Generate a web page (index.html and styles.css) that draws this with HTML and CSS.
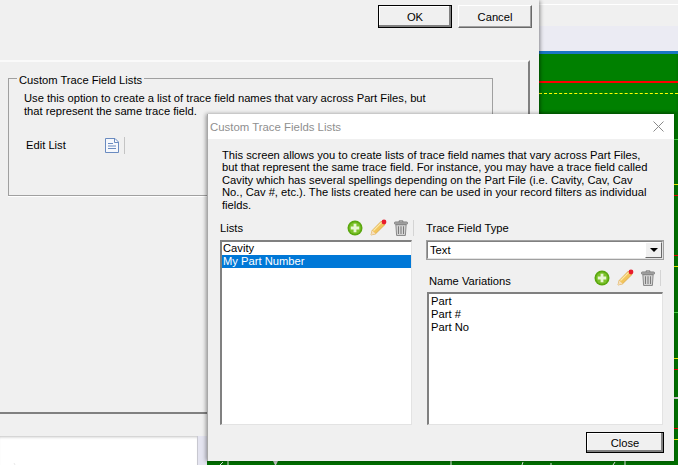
FILE: index.html
```html
<!DOCTYPE html>
<html lang="en">
<head>
<meta charset="utf-8">
<title>Custom Trace Fields Lists</title>
<link rel="stylesheet" href="styles.css">
</head>
<body>
<svg width="0" height="0" class="defs">
  <symbol id="i-add" viewBox="0 0 17 17">
    <circle cx="8.5" cy="8.5" r="8" fill="#5aa70f"/>
    <circle cx="8.5" cy="8.5" r="6.2" fill="#7cc22a"/>
    <path d="M7 4h3v3h3v3h-3v3H7v-3H4V7h3z" fill="#e9f6d4"/>
  </symbol>
  <symbol id="i-edit" viewBox="0 0 17 17">
    <path d="M1 16l1.2-4.5L11.5 2l3.5 3.5-9.4 9.3z" fill="#f2c55c" stroke="#d9a441" stroke-width=".8"/>
    <path d="M1 16l1.2-4.5 3.4 3.3z" fill="#f6dfc0"/>
    <path d="M3.5 11.5l8.7-8.7" stroke="#fbe9a8" stroke-width="1.2"/>
    <circle cx="14" cy="3" r="2.4" fill="#e81c2c"/>
  </symbol>
  <symbol id="i-trash" viewBox="0 0 15 17">
    <path d="M5.5 2V.8h4V2" fill="none" stroke="#777" stroke-width="1"/>
    <rect x=".5" y="2" width="14" height="2.5" rx="1" fill="#a9a9a9" stroke="#707070" stroke-width=".8"/>
    <path d="M2 5h11l-.8 11.5H2.800z" fill="#d6d6d6" stroke="#777" stroke-width=".9"/>
    <path d="M4.800 6.500v8.500M7.500 6.500v8.500M10.200 6.500v8.500" stroke="#7a7a7a" stroke-width="1.100"/>
  </symbol>
</svg>

<div class="desktop">
  <div class="app-strip">
    <div class="app-strip-top"></div>
    <div class="app-strip-low"></div>
  </div>
  <div class="plot">
    <i class="plot-red"></i>
    <i class="plot-yellow"></i>
  </div>
  <i class="tick tick-green t3"></i><i class="tick tick-yellow t2"></i><i class="tick tick-red t1"></i>
  <i class="tick tick-red t5"></i><i class="tick tick-yellow t4"></i><i class="tick tick-green t8"></i>
  <i class="tick tick-yellow t9"></i><i class="tick tick-red t10"></i><i class="tick tick-grey t11"></i>
  <i class="tick tick-red t6"></i><i class="tick tick-yellow t7"></i>

  <section class="back-window">
    <div class="back-buttons">
      <button class="btn btn-default btn-wide">OK</button>
      <button class="btn btn-wide">Cancel</button>
    </div>
    <div class="back-panel">
      <fieldset class="group">
        <legend>Custom Trace Field Lists</legend>
        <p>Use this option to create a list of trace field names that vary across Part Files, but<br>that represent the same trace field.</p>
        <div class="edit-row">
          <span class="edit-label">Edit List</span>
          <svg class="doc-icon" width="14" height="15" viewBox="0 0 14 15">
            <path d="M.5.500h9.500l3.500 3.500v10.500H.5z" fill="#f6f8fc" stroke="#6a8bc0"/>
            <path d="M9.500.500v4h4" fill="none" stroke="#6a8bc0"/>
            <path d="M3 5.500h5M3 8h8M3 10.500h8" stroke="#6a8bc0"/>
          </svg>
          <span class="tool-sep"></span>
        </div>
      </fieldset>
    </div>
  </section>

  <div class="below-white"></div>
  <div class="below-strip"></div>
  <svg class="bottom-marks" width="678" height="4" viewBox="0 0 678 4">
    <path d="M15 4l-1-2M220 4l3-3M228 4V0M451 4V0M522 4l1-3M551 4V2M613 4l2-3M625 4V0" fill="none" stroke="#e8e8e8"/>
    <path d="M273 0h5l-2 4h-1z" fill="#c8c8c8"/>
  </svg>

  <section class="dialog">
    <header class="dialog-title">
      <span>Custom Trace Fields Lists</span>
      <svg class="close-x" width="11" height="11" viewBox="0 0 11 11"><path d="M.5.500l10 10M10.500.500l-10 10" stroke="#8a8a8a" fill="none"/></svg>
    </header>
    <div class="dialog-body">
      <p class="intro">This screen allows you to create lists of trace field names that vary across Part Files,<br>but that represent the same trace field. For instance, you may have a trace field called<br>Cavity which has several spellings depending on the Part File (i.e. Cavity, Cav, Cav<br>No., Cav #, etc.). The lists created here can be used in your record filters as individual<br>fields.</p>
      <div class="columns">
        <div class="col-left">
          <div class="toolbar-row row-lists">
            <span>Lists</span>
            <span class="tools">
              <svg class="ic-add"><use href="#i-add"/></svg>
              <svg class="ic-edit"><use href="#i-edit"/></svg>
              <svg class="ic-trash"><use href="#i-trash"/></svg>
              <span class="tool-sep"></span>
            </span>
          </div>
          <ul class="listbox list-left">
            <li>Cavity</li>
            <li class="selected">My Part Number</li>
          </ul>
        </div>
        <div class="col-right">
          <div class="type-label">Trace Field Type</div>
          <div class="combo">
            <span>Text</span>
            <span class="combo-btn"><i></i></span>
          </div>
          <div class="toolbar-row row-variations">
            <span>Name Variations</span>
            <span class="tools">
              <svg class="ic-add"><use href="#i-add"/></svg>
              <svg class="ic-edit"><use href="#i-edit"/></svg>
              <svg class="ic-trash"><use href="#i-trash"/></svg>
              <span class="tool-sep"></span>
            </span>
          </div>
          <ul class="listbox list-right">
            <li>Part</li>
            <li>Part #</li>
            <li>Part No</li>
          </ul>
        </div>
      </div>
      <div class="dialog-footer">
        <button class="btn btn-default btn-close">Close</button>
      </div>
    </div>
  </section>
</div>
</body>
</html>
```
FILE: styles.css
```css
* { box-sizing: border-box; }
html, body { margin: 0; padding: 0; }
body {
  width: 678px;
  height: 465px;
  overflow: hidden;
  font-family: "Liberation Sans", Arial, sans-serif;
  font-size: 11.2px;
  color: #000;
  background: #fff;
}
.defs { position: absolute; }
.desktop { position: relative; width: 678px; height: 465px; overflow: hidden; background: #006f00; }

.app-strip { position: absolute; left: 539px; top: 0; width: 139px; height: 54px; background: #f0f0f0; border-bottom: 3px solid #1a76c4; }
.app-strip-top { height: 5px; border-bottom: 1px solid #fff; }
.app-strip-low { margin-top: 21px; height: 25px; background: #ebebf3; }
.plot { position: absolute; left: 539px; top: 54px; width: 139px; height: 60px; background: #008000; box-shadow: inset 0 -2px 3px rgba(0,0,0,.2); }
.plot-red { position: absolute; left: 0; right: 0; top: 27px; height: 2px; background: #f00; }
.plot-yellow { position: absolute; left: 0; right: 0; top: 39px; border-top: 1px dashed #ff0; }

.tick { position: absolute; left: 674px; width: 4px; height: 1px; }
.tick-red { background: #e00; }
.tick-yellow { background: #ee0; }
.tick-green { background: #4c4; }
.tick-grey { background: #ccc; height: 2px; }
.t1 { top: 195px; } .t2 { top: 184px; } .t3 { top: 139px; }
.t4 { top: 266px; } .t5 { top: 255px; } .t6 { top: 428px; }
.t7 { top: 439px; } .t8 { top: 312px; } .t9 { top: 358px; }
.t10 { top: 369px; } .t11 { top: 397px; }

.back-window {
  position: absolute;
  left: 0;
  top: 0;
  width: 539px;
  height: 436px;
  background: #f0f0f0;
  box-shadow: 1px 1px 4px rgba(0,0,0,.45);
  display: flex;
  flex-direction: column;
}
.back-buttons { height: 60px; padding: 5px 7px 0 0; display: flex; justify-content: flex-end; gap: 6px; }
.back-panel {
  width: 530px;
  height: 354px;
  border-top: 2px solid #fafafa;
  border-right: 2px solid #808080;
  border-bottom: 2px solid #808080;
  padding: 7px 0 0 8px;
}

.btn {
  font: inherit;
  color: #000;
  background: #f0f0f0;
  padding: 0;
  border: 1px solid;
  border-color: #fff #696969 #696969 #fff;
  box-shadow: inset -1px -1px 0 #a0a0a0;
}
.btn-wide { width: 74px; height: 23px; }
.btn-default { border: 1px solid #000; box-shadow: inset -2px -2px 0 #808080, inset 1px 1px 0 #fff; }
.btn-close { width: 78px; height: 21px; }

.group {
  width: 485px;
  height: 127px;
  margin: 0;
  padding: 0 0 0 15px;
  border: 1px solid #a0a0a0;
  box-shadow: 0 1px 0 #fff;
}
.group legend { padding: 4px 2px 0; margin-left: -7px; line-height: 14px; }
.group p { margin: 5px 0 0; line-height: 13px; }
.edit-row { display: flex; align-items: center; margin-top: 17px; padding-left: 2px; height: 20px; }
.edit-label { width: 79px; }
.doc-icon { display: block; }
.tool-sep { display: inline-block; width: 1px; height: 17px; margin-left: 5px; background: #c4c4c4; }

.below-white { position: absolute; left: 0; top: 436px; width: 197px; height: 29px; background: #fff; box-shadow: inset 0 3px 3px -2px rgba(0,0,0,.25); }
.below-strip { position: absolute; left: 197px; top: 436px; width: 10px; height: 29px; background: #e4e4f0; border-left: 1px solid #c8c8d0; }
.bottom-marks { position: absolute; left: 0; top: 461px; display: block; }

.dialog {
  position: absolute;
  left: 207px;
  top: 114px;
  width: 467px;
  height: 347px;
  background: #f0f0f0;
  box-shadow: -1px 0 4px rgba(0,0,0,.4);
  border-left: 1px solid #a8a8a8;
  display: flex;
  flex-direction: column;
}
.dialog-title {
  height: 25px;
  flex: none;
  background: #fff;
  color: #8f8f8f;
  font-size: 11.4px;
  padding: 0 10px 0 2px;
  display: flex;
  align-items: center;
  justify-content: space-between;
}
.close-x { display: block; }
.dialog-body { padding: 10px 10px 0 12px; flex: 1; display: flex; flex-direction: column; }
.intro { margin: 0 0 0 2px; line-height: 12.4px; height: 62px; }
.columns { display: flex; margin-top: 7px; height: 207px; }
.col-left { width: 192px; flex: none; }
.col-right { margin-left: 14px; width: 238px; flex: none; }
.toolbar-row { display: flex; align-items: center; justify-content: space-between; }
.row-lists { height: 22px; padding-bottom: 3px; margin-right: -2px; }
.tools { display: flex; align-items: center; }
.ic-add { width: 16px; height: 16px; margin-right: 7px; }
.ic-edit { width: 17px; height: 17px; margin-right: 7px; }
.ic-trash { width: 14px; height: 16px; }
.tools .tool-sep { margin-left: 5px; height: 16px; background: #d4d4d4; }

.listbox {
  list-style: none;
  margin: 0;
  padding: 0;
  background: #fff;
  border: solid;
  border-width: 2px 1px 1px 2px;
  border-color: #808080 #e3e3e3 #e3e3e3 #808080;
  line-height: 13px;
}
.listbox li { padding-left: 1px; height: 13px; }
.list-left { height: 185px; }
.listbox .selected { background: #0078d7; color: #fff; }
.type-label { height: 22px; line-height: 21px; }
.combo {
  height: 20px;
  background: #fff;
  border: 2px solid;
  border-color: #808080 #e3e3e3 #e3e3e3 #808080;
  outline: 1px solid #a0a0a0;
  outline-offset: -1px;
  padding-left: 2px;
  line-height: 16px;
  display: flex;
  justify-content: space-between;
}
.combo-btn {
  width: 17px;
  height: 16px;
  background: #f0f0f0;
  border: 1px solid;
  border-color: #fff #696969 #696969 #fff;
  display: flex;
  align-items: center;
  justify-content: center;
}
.combo-btn i { width: 0; height: 0; border: 4px solid transparent; border-top: 4px solid #000; border-bottom: 0; }
.row-variations { margin: 10px 0 1px 3px; height: 21px; padding-right: 3px; }
.row-variations .tools { margin-top: -6px; }
.list-right { height: 133px; margin-left: 1px; width: 236px; padding-top: 1px; }
.list-right li { padding-left: 2px; }
.dialog-footer { display: flex; justify-content: flex-end; margin-top: 7px; }
```
